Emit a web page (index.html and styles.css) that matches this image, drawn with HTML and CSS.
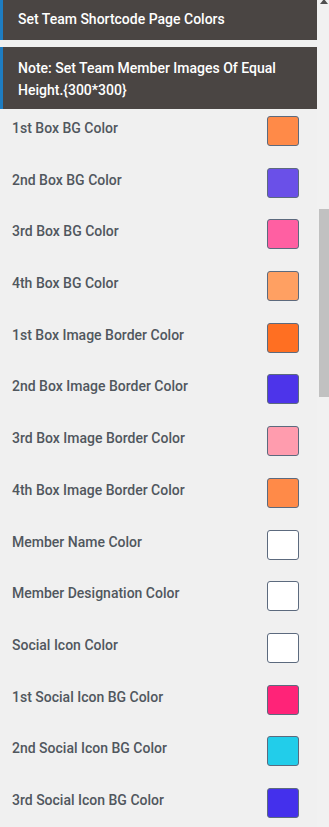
FILE: index.html
```html
<!DOCTYPE html>
<html lang="en">
<head>
  <meta charset="UTF-8" />
  <meta name="viewport" content="width=device-width, initial-scale=1.0"/>
  <title>Team Shortcode Colors</title>
  <link rel="stylesheet" href="styles.css">
</head>
<body>

  <div class="page">
    <!-- Settings panel -->
    <div class="panel">
      <div class="notice">Set Team Shortcode Page Colors</div>
      <div class="notice notice-note">Note: Set Team Member Images Of Equal Height.{300*300}</div>

      <div class="rows">
        <div class="row"><span class="label">1st Box BG Color</span><span class="swatch c-orange"></span></div>
        <div class="row"><span class="label">2nd Box BG Color</span><span class="swatch c-violet"></span></div>
        <div class="row"><span class="label">3rd Box BG Color</span><span class="swatch c-pink"></span></div>
        <div class="row"><span class="label">4th Box BG Color</span><span class="swatch c-peach"></span></div>
        <div class="row"><span class="label">1st Box Image Border Color</span><span class="swatch c-deep-orange"></span></div>
        <div class="row"><span class="label">2nd Box Image Border Color</span><span class="swatch c-indigo"></span></div>
        <div class="row"><span class="label">3rd Box Image Border Color</span><span class="swatch c-rose"></span></div>
        <div class="row"><span class="label">4th Box Image Border Color</span><span class="swatch c-orange"></span></div>
        <div class="row"><span class="label">Member Name Color</span><span class="swatch c-white"></span></div>
        <div class="row"><span class="label">Member Designation Color</span><span class="swatch c-white"></span></div>
        <div class="row"><span class="label">Social Icon Color</span><span class="swatch c-white"></span></div>
        <div class="row"><span class="label">1st Social Icon BG Color</span><span class="swatch c-hotpink"></span></div>
        <div class="row"><span class="label">2nd Social Icon BG Color</span><span class="swatch c-cyan"></span></div>
        <div class="row"><span class="label">3rd Social Icon BG Color</span><span class="swatch c-blue"></span></div>
      </div>
    </div>

    <!-- Scrollbar -->
    <div class="scrollbar">
      <div class="arrow-up"></div>
      <div class="thumb"></div>
    </div>
  </div>

</body>
</html>
```

FILE: styles.css
```css
* {
  box-sizing: border-box;
}

body {
  margin: 0;
  background: #f0f0f0;
  font-family: Roboto, "Liberation Sans", sans-serif;
  font-size: 14px;
  color: #50575e;
}

.page {
  display: flex;
  height: 827px;
  overflow: hidden;
}

/* Panel */
.panel {
  width: 317px;
}

.notice {
  background: #4a4543;
  color: #fff;
  border-left: 3px solid #1e7dc2;
  font-weight: 500;
  line-height: 20px;
  padding: 9px 12px 11px 15px;
}

.notice-note {
  margin-top: 7px;
  line-height: 22px;
  padding: 10px 12px 8px 15px;
}

.rows {
  margin-top: 1px;
}

.row {
  height: 51.7px;
  display: flex;
  justify-content: space-between;
  align-items: flex-start;
  padding: 6px 18px 0 12px;
}

.label {
  margin-top: 2px;
  line-height: 20px;
  font-weight: 500;
}

.swatch {
  width: 32px;
  height: 30px;
  border: 1px solid #5c6a7e;
  border-radius: 3px;
}

.c-orange { background: #ff8a48; }
.c-violet { background: #6a50e8; }
.c-pink { background: #ff5fa2; }
.c-peach { background: #ffa062; }
.c-deep-orange { background: #ff6f22; }
.c-indigo { background: #4d34ea; }
.c-rose { background: #ff9cae; }
.c-white { background: #fff; }
.c-hotpink { background: #ff2378; }
.c-cyan { background: #22cdea; }
.c-blue { background: #4430ec; }

/* Scrollbar */
.scrollbar {
  width: 12px;
  background: #f1f1f1;
  padding-top: 0;
}

.arrow-up {
  width: 0;
  height: 0;
  margin: -1px 0 0 3px;
  border-left: 4px solid transparent;
  border-right: 4px solid transparent;
  border-bottom: 5px solid #505050;
}

.thumb {
  margin: 205px 0 0 2px;
  width: 10px;
  height: 188px;
  background: #c1c1c1;
}
```
